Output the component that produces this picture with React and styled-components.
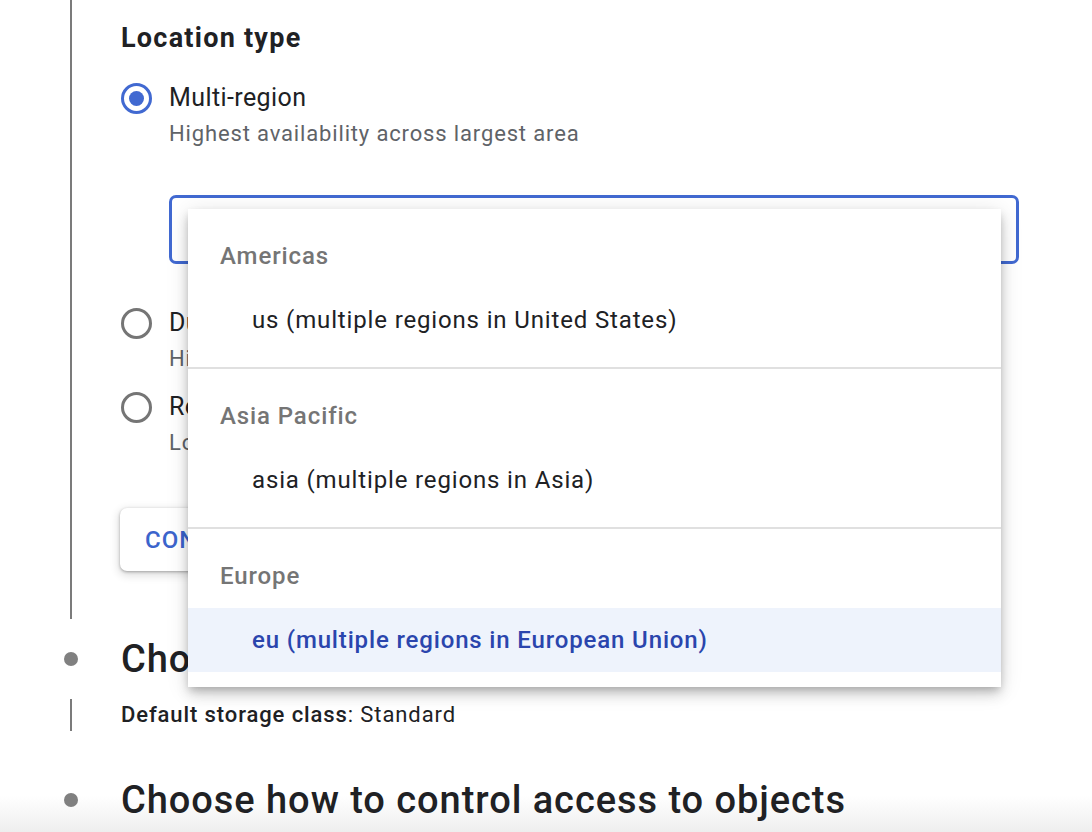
import React from "react";
import styled, { createGlobalStyle } from "styled-components";

const Global = createGlobalStyle`
  html, body { margin: 0; padding: 0; background: #fff; }
  body { font-family: Roboto, "Noto Sans", "Liberation Sans", sans-serif; color: #202124; }
  * { box-sizing: border-box; }
`;

const Page = styled.div`
  width: 1092px;
  height: 832px;
  overflow: hidden;
  position: relative;
  background: linear-gradient(to bottom, #fff 0, #fff 796px, #eeeeee 832px);
`;

const Step = styled.div`
  display: grid;
  grid-template-columns: 121px 1fr;
  margin-top: ${(p) => p.$mt || 0}px;
`;

const RailCell = styled.div`
  display: flex;
  justify-content: center;
  align-items: center;
  padding-left: 20px;
`;

const RailLine = styled.div`
  width: 2px;
  align-self: stretch;
  background: #7b7b7b;
`;

const Dot = styled.div`
  width: 14px;
  height: 14px;
  border-radius: 50%;
  background: #808080;
`;

const Body = styled.div`
  padding-top: ${(p) => p.$pt || 0}px;
  padding-bottom: ${(p) => p.$pb || 0}px;
`;

const Title = styled.div`
  font-size: 27px;
  line-height: 32px;
  font-weight: 700;
  letter-spacing: 1.25px;
  color: #202124;
`;

const Option = styled.div`
  display: grid;
  grid-template-columns: 48px 1fr;
  margin-top: ${(p) => p.$mt || 0}px;
`;

const RadioCell = styled.div`
  height: 32px;
  display: flex;
  align-items: center;
`;

const Radio = styled.div`
  width: 31px;
  height: 31px;
  border-radius: 50%;
  border: 3px solid ${(p) => (p.$checked ? "#4169d1" : "#757575")};
  display: flex;
  align-items: center;
  justify-content: center;
  &::after {
    content: "";
    width: 15px;
    height: 15px;
    border-radius: 50%;
    background: ${(p) => (p.$checked ? "#4169d1" : "transparent")};
  }
`;

const Label = styled.div`
  font-size: 25px;
  line-height: 32px;
  letter-spacing: 0.4px;
  color: #202124;
  white-space: nowrap;
`;

const Desc = styled.div`
  font-size: 22px;
  line-height: 32px;
  letter-spacing: 0.85px;
  margin-top: 4px;
  color: #5f6368;
  white-space: nowrap;
`;

const SelectWrap = styled.div`
  position: relative;
  margin-left: 48px;
  margin-top: 45px;
  width: 850px;
  height: 69px;
  border: 3px solid #4169d1;
  border-radius: 7px;
`;

const Menu = styled.div`
  position: absolute;
  left: 16px;
  top: 11px;
  width: 813px;
  background: #fff;
  z-index: 10;
  box-shadow: 0 4px 8px -2px rgba(0, 0, 0, 0.22), 0 8px 12px rgba(0, 0, 0, 0.12),
    0 3px 22px rgba(0, 0, 0, 0.12);
`;

const Group = styled.div`
  padding: 15px 0;
  & + & {
    border-top: 2px solid #e0e0e0;
  }
`;

const GroupHeader = styled.div`
  height: 64px;
  display: flex;
  align-items: center;
  padding-left: 32px;
  font-size: 24px;
  font-weight: 500;
  letter-spacing: 0.9px;
  color: #757575;
`;

const Item = styled.div`
  height: 64px;
  display: flex;
  align-items: center;
  padding-left: 64px;
  font-size: 24px;
  letter-spacing: 0.85px;
  font-weight: ${(p) => (p.$active ? 500 : 400)};
  color: ${(p) => (p.$active ? "#2a45ad" : "#202124")};
  background: ${(p) => (p.$active ? "#eef3fc" : "transparent")};
`;

const Button = styled.button`
  margin-top: 49px;
  margin-left: -1px;
  height: 63px;
  padding: 0 25px;
  border: none;
  border-radius: 7px;
  background: #fff;
  font-family: Roboto, "Noto Sans", sans-serif;
  font-size: 24px;
  font-weight: 500;
  letter-spacing: 1px;
  color: #3b64cc;
  box-shadow: 0 1px 3px rgba(0, 0, 0, 0.3), 0 3px 8px 2px rgba(0, 0, 0, 0.12);
`;

const Heading = styled.div`
  font-size: 38px;
  line-height: 48px;
  font-weight: 500;
  letter-spacing: 0.95px;
  color: #202124;
  white-space: nowrap;
`;

const Summary = styled.div`
  font-size: 22px;
  line-height: 32px;
  letter-spacing: 0.9px;
  color: #202124;
  white-space: nowrap;
  b { font-weight: 500; }
`;

const options = [
  { label: "Dual-region", desc: "High availability and low latency across 2 regions", mt: 43 },
  { label: "Region", desc: "Lowest latency within a single region", mt: 16 },
];

const groups = [
  { name: "Americas", item: "us (multiple regions in United States)" },
  { name: "Asia Pacific", item: "asia (multiple regions in Asia)" },
  { name: "Europe", item: "eu (multiple regions in European Union)", active: true },
];

export default function App() {
  return (
    <Page>
      <Global />
      <Step>
        <RailCell>
          <RailLine />
        </RailCell>
        <Body $pt={22} $pb={48}>
          <Title>Location type</Title>
          <Option $mt={28}>
            <RadioCell>
              <Radio $checked />
            </RadioCell>
            <div>
              <Label>Multi-region</Label>
              <Desc>Highest availability across largest area</Desc>
            </div>
          </Option>
          <SelectWrap>
            <Menu>
              {groups.map((g) => (
                <Group key={g.name}>
                  <GroupHeader>{g.name}</GroupHeader>
                  <Item $active={g.active}>{g.item}</Item>
                </Group>
              ))}
            </Menu>
          </SelectWrap>
          {options.map((o) => (
            <Option key={o.label} $mt={o.mt}>
              <RadioCell>
                <Radio />
              </RadioCell>
              <div>
                <Label>{o.label}</Label>
                <Desc>{o.desc}</Desc>
              </div>
            </Option>
          ))}
          <Button>CONTINUE</Button>
        </Body>
      </Step>
      <Step $mt={16}>
        <RailCell>
          <Dot />
        </RailCell>
        <Heading>Choose a storage class for your data</Heading>
      </Step>
      <Step $mt={16}>
        <RailCell>
          <RailLine />
        </RailCell>
        <Summary>
          <b>Default storage class</b>: Standard
        </Summary>
      </Step>
      <Step $mt={45}>
        <RailCell>
          <Dot />
        </RailCell>
        <Heading>Choose how to control access to objects</Heading>
      </Step>
    </Page>
  );
}
